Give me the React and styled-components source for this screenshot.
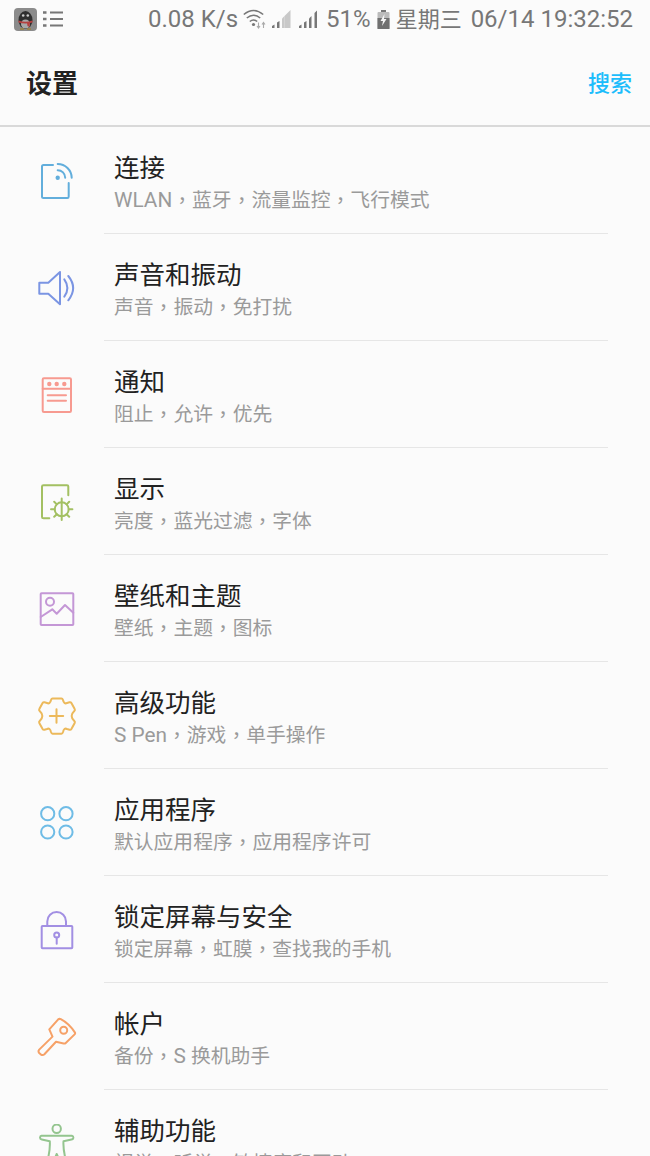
import React from 'react';
import styled, { createGlobalStyle } from 'styled-components';

const GlobalStyle = createGlobalStyle`
  html, body { margin: 0; padding: 0; background: #fbfbfb; }
  body { font-family: Roboto, "Noto Sans CJK SC", sans-serif; }
`;

const Page = styled.div`
  width: 650px;
  height: 1156px;
  overflow: hidden;
  background: #fbfbfb;
`;

const StatusBar = styled.div`
  display: flex;
  align-items: center;
  box-sizing: border-box;
  height: 40px;
  padding: 0 17px 2px 14px;
  color: #777;
  font-size: 24px;
  white-space: nowrap;
`;

const StatusLeft = styled.div`
  display: flex;
  align-items: center;
  gap: 6px;
`;

const StatusRight = styled.div`
  display: flex;
  align-items: center;
  margin-left: auto;
`;

const StatusText = styled.span`
  margin-left: ${p => p.$gap || 0}px;
  line-height: 38px;
`;

const Weekday = styled.span`
  font-size: 22px;
  margin-right: 3px;
`;

const StatusIcon = styled.svg`
  display: block;
  flex: none;
  margin-left: ${p => p.$gap || 0}px;
`;

const Header = styled.header`
  display: flex;
  align-items: center;
  justify-content: space-between;
  box-sizing: content-box;
  height: 82px;
  padding: 0 18px 3px 26px;
  border-bottom: 2px solid #d9d9d9;
`;

const Title = styled.h1`
  margin: 0;
  font-size: 26px;
  font-weight: 700;
  color: #222;
`;

const Search = styled.a`
  font-size: 22px;
  font-weight: 500;
  color: #1dbdfb;
`;

const List = styled.ul`
  list-style: none;
  margin: 0;
  padding: 0;
`;

const Row = styled.li`
  display: flex;
  height: 107px;
`;

const IconSlot = styled.div`
  flex: none;
  width: 104px;
  padding-left: 37px;
  box-sizing: border-box;
  display: flex;
  align-items: center;
`;

const Glyph = styled.svg`
  display: block;
  width: 40px;
  height: 40px;
  fill: none;
  color: ${p => p.$color};
  stroke: ${p => p.$color};
  stroke-width: 2;
  stroke-linecap: round;
  stroke-linejoin: round;
`;

const Body = styled.div`
  flex: none;
  width: 504px;
  box-sizing: border-box;
  padding: 23px 0 0 10px;
  border-bottom: 1px solid #e6e6e6;
`;

const RowTitle = styled.div`
  font-size: 25.5px;
  line-height: 36px;
  color: #222;
`;

const RowSub = styled.div`
  font-size: 19.8px;
  line-height: 27px;
  color: #9a9a9a;
`;

const Latin = styled.span`
  font-size: 20.8px;
`;

// the phone's font centres the comma in its cell, the TC face does too
const Comma = styled.span`
  font-family: "Noto Sans CJK TC", sans-serif;
  vertical-align: -1px;
`;

const renderSub = text =>
  text.split(/(，|[A-Za-z ]+)/).filter(Boolean).map((part, i) => {
    if (part === '，') return <Comma key={i}>{part}</Comma>;
    if (/^[A-Za-z ]+$/.test(part)) return <Latin key={i}>{part}</Latin>;
    return <span key={i}>{part}</span>;
  });

const ICONS = {
  connect: (
    <>
      <path d="M16 4H6.5Q5 4 5 5.5V35.5Q5 37 6.5 37H30.3Q31.7 37 31.7 35.5V22" />
      <circle cx="20.7" cy="16.7" r="1.2" fill="currentColor" />
      <path d="M20.7 9.2A7.5 7.5 0 0 1 28.2 16.7" />
      <path d="M20.7 3A14 14 0 0 1 34.7 16.7" />
    </>
  ),
  sound: (
    <>
      <path d="M2.3 14.7H11.3L23 4V36.3L11.3 25.7H2.3Z" />
      <path d="M27.3 11.3Q33.5 20 27.3 28.7" />
      <path d="M31.3 8Q41 20 31.3 32.3" />
    </>
  ),
  notice: (
    <>
      <rect x="5.7" y="3.3" width="28.3" height="33.7" rx="1.2" />
      <path d="M5.7 13.7H34M10.7 20.3H29M10.7 25.7H29" />
      <circle cx="12.3" cy="9" r="1.2" fill="currentColor" />
      <circle cx="19.7" cy="9" r="1.2" fill="currentColor" />
      <circle cx="27.3" cy="9" r="1.2" fill="currentColor" />
    </>
  ),
  display: (
    <>
      <path d="M12.3 36.3H6.5Q5 36.3 5 35V4.6Q5 3.3 6.5 3.3H30Q31.3 3.3 31.3 4.6V13.3" />
      <circle cx="24.7" cy="27.3" r="7" />
      <path d="M24.7 16.5V38M14 27.3H17.7M31.7 27.3H35.4M17.2 19.8L19.8 22.4M32.2 19.8L29.6 22.4M17.2 34.8L19.8 32.2M32.2 34.8L29.6 32.2" />
    </>
  ),
  wallpaper: (
    <>
      <rect x="3.7" y="4.3" width="32.6" height="31.7" rx="0.8" />
      <circle cx="13" cy="12.7" r="4" />
      <path d="M3.7 28L15.3 20.3L19.7 24.7L28 16L36.3 23.7" />
    </>
  ),
  advanced: (
    <>
      <path d="M15.5 2.5H24.5Q25.5 2.5 26 4Q27 8.5 30 7L32.5 6.3Q33.8 6 34.4 7L37.7 13Q38.3 14 37.3 15Q32 20 37.3 25Q38.3 26 37.7 27L34.4 33Q33.8 34 32.5 33.7L30 33Q27 31.5 26 36Q25.5 37.7 24.5 37.7H15.5Q14.5 37.7 14 36Q13 31.5 10 33L7.5 33.7Q6.2 34 5.6 33L2.3 27Q1.7 26 2.7 25Q8 20 2.7 15Q1.7 14 2.3 13L5.6 7Q6.2 6 7.5 6.3L10 7Q13 8.5 14 4Q14.5 2.5 15.5 2.5Z" />
      <path d="M19.5 13.3V26.7M12.8 20H26.2" />
    </>
  ),
  apps: (
    <>
      <circle cx="10.7" cy="10.7" r="6.6" />
      <circle cx="29" cy="10.7" r="6.6" />
      <circle cx="10.7" cy="29" r="6.6" />
      <circle cx="29" cy="29" r="6.6" />
    </>
  ),
  lock: (
    <>
      <rect x="4.7" y="16" width="30.6" height="22.3" rx="0.8" />
      <path d="M10.3 16V11.4A9.35 9.35 0 0 1 29 11.4V16" />
      <circle cx="19.7" cy="25" r="2.5" />
      <path d="M19.7 27.5V33.7" />
    </>
  ),
  account: (
    <>
      <path d="M12.3 12.3L21 2.6Q22.3 1.4 23.8 2.2Q32 6.5 38 15.6Q38.4 16.6 37.6 17.4L28.5 26.2Q27.7 26.9 26.6 26.4L19 24.7L7.4 37.3Q6 38.6 4.2 37.8L2.2 36Q.8 34.3 2.2 32.6L15.5 19.6Z" />
      <circle cx="26.7" cy="13.3" r="3.5" />
    </>
  ),
  access: (
    <>
      <circle cx="19.7" cy="4.7" r="4.2" />
      <path d="M4.5 11.8H34.8Q36.6 12.3 36.3 14Q36 15.4 34.5 15.6L26.5 17.2Q25.8 27 30.5 42H25L19.7 30L14.5 42H9Q13.5 27 12.8 17.2L4.8 15.6Q3 15.2 3 13.6Q3.2 12 4.5 11.8Z" />
    </>
  ),
};

const ROWS = [
  { icon: 'connect', color: '#62aedc', title: '连接', sub: 'WLAN，蓝牙，流量监控，飞行模式' },
  { icon: 'sound', color: '#7b95e3', title: '声音和振动', sub: '声音，振动，免打扰' },
  { icon: 'notice', color: '#f79a90', title: '通知', sub: '阻止，允许，优先' },
  { icon: 'display', color: '#a3c062', title: '显示', sub: '亮度，蓝光过滤，字体' },
  { icon: 'wallpaper', color: '#c497d6', title: '壁纸和主题', sub: '壁纸，主题，图标' },
  { icon: 'advanced', color: '#ecb95b', title: '高级功能', sub: 'S Pen，游戏，单手操作' },
  { icon: 'apps', color: '#6fbce6', title: '应用程序', sub: '默认应用程序，应用程序许可' },
  { icon: 'lock', color: '#a28fe3', title: '锁定屏幕与安全', sub: '锁定屏幕，虹膜，查找我的手机' },
  { icon: 'account', color: '#f6a167', title: '帐户', sub: '备份，S 换机助手' },
  { icon: 'access', color: '#94c58f', title: '辅助功能', sub: '视觉，听觉，敏捷度和互动' },
];

const QQIcon = () => (
  <StatusIcon width="23" height="23" viewBox="0 0 23 23">
    <rect width="23" height="23" rx="4" fill="#8b8b8b" />
    <ellipse cx="11.5" cy="12" rx="7" ry="9" fill="#2f2f2f" />
    <ellipse cx="11.5" cy="16" rx="4.5" ry="4.5" fill="#a8a8a8" />
    <circle cx="9.2" cy="7.5" r="1.3" fill="#ccc" />
    <circle cx="13.8" cy="7.5" r="1.3" fill="#ccc" />
    <path d="M4.5 12.5Q11.5 15 18.5 12.5V14.5Q11.5 16.5 4.5 14.5Z" fill="#b5403f" />
    <path d="M13 15L16 15L15.5 19L13.5 18Z" fill="#b5403f" />
    <path d="M6 21H10M13 21H17" stroke="#9c8240" strokeWidth="1.4" />
  </StatusIcon>
);

const MenuIcon = () => (
  <StatusIcon width="20" height="16" viewBox="0 0 20 16">
    <path d="M7 1.5H20M7 8H20M7 14.5H20" stroke="#777" strokeWidth="2" />
    <path d="M0 1.5H3.5M0 8H3.5M0 14.5H3.5" stroke="#777" strokeWidth="2.4" />
  </StatusIcon>
);

const WifiIcon = () => (
  <StatusIcon $gap={5} width="25" height="20" viewBox="0 0 25 20">
    <g fill="none" stroke="#777" strokeWidth="1.6">
      <path d="M0.8 5.5Q10.5 -2.5 20.2 5.5" />
      <path d="M3.8 9Q10.5 3.5 17.2 9" />
      <path d="M6.8 12.5Q10.5 9.5 14.2 12.5" />
    </g>
    <circle cx="10.5" cy="15.5" r="1.6" fill="#777" />
    <path d="M15.5 13.5V18.5M14 17L15.5 19L17 17" stroke="#aaa" strokeWidth="1.1" fill="none" />
    <path d="M20.5 19V14M19 15.5L20.5 13.5L22 15.5" stroke="#aaa" strokeWidth="1.1" fill="none" />
  </StatusIcon>
);

const SignalIcon = ({ gap, faded }) => (
  <StatusIcon $gap={gap} width="19" height="20" viewBox="0 0 19 20">
    <path d="M0 19V17L2.5 15.5V19Z" fill="#777" />
    <path d="M5 19V13.5L7.5 12V19Z" fill="#777" />
    <path d="M10 19V9.5L12.5 7V19Z" fill={faded ? '#c8c8c8' : '#777'} />
    <path d={faded ? 'M12.5 19V7L18.5 1V19Z' : 'M15.5 19V4L18 1.5V19Z'} fill={faded ? '#c8c8c8' : '#777'} />
  </StatusIcon>
);

const BatteryIcon = () => (
  <StatusIcon $gap={6} width="13" height="19" viewBox="0 0 13 19">
    <path d="M4 0H9V2H4Z" fill="#777" />
    <rect x="0.5" y="2" width="12" height="17" rx="1" fill="#bbb" />
    <rect x="0.5" y="8" width="12" height="11" fill="#707070" />
    <path d="M7.5 4L3.5 11H6L5 16L9.5 9H7Z" fill="#f5f5f5" />
  </StatusIcon>
);

const App = () => {
  return (
    <Page>
      <GlobalStyle />
      <StatusBar>
        <StatusLeft>
          <QQIcon />
          <MenuIcon />
        </StatusLeft>
        <StatusRight>
          <StatusText>0.08 K/s</StatusText>
          <WifiIcon />
          <SignalIcon gap={4} faded />
          <SignalIcon gap={8} />
          <StatusText $gap={8}>51%</StatusText>
          <BatteryIcon />
          <StatusText $gap={6}><Weekday>星期三</Weekday> 06/14 19:32:52</StatusText>
        </StatusRight>
      </StatusBar>
      <Header>
        <Title>设置</Title>
        <Search>搜索</Search>
      </Header>
      <List>
        {ROWS.map(row => (
          <Row key={row.icon}>
            <IconSlot>
              <Glyph viewBox="0 0 40 40" $color={row.color}>
                {ICONS[row.icon]}
              </Glyph>
            </IconSlot>
            <Body>
              <RowTitle>{row.title}</RowTitle>
              <RowSub>{renderSub(row.sub)}</RowSub>
            </Body>
          </Row>
        ))}
      </List>
    </Page>
  );
};

export default App;
